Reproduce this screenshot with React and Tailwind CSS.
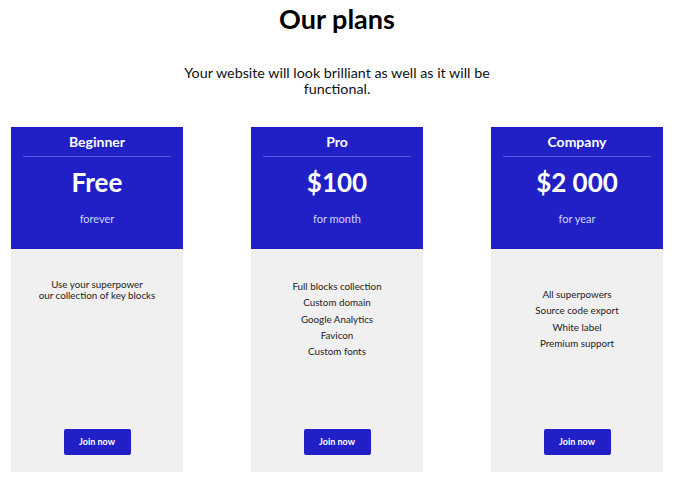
import React from "react";

const plans = [
  { name: "Beginner", price: "Free", period: "forever", type: "p", items: ["Use your superpower", "our collection of key blocks"], pt: "pt-[30px]" },
  { name: "Pro", price: "$100", period: "for month", type: "list", items: ["Full blocks collection", "Custom domain", "Google Analytics", "Favicon", "Custom fonts"], pt: "pt-[29px]" },
  { name: "Company", price: "$2 000", period: "for year", type: "list", items: ["All superpowers", "Source code export", "White label", "Premium support"], pt: "pt-[37px]" },
];

export default function App() {
  return (
    <div className="w-[685px] h-[487px] bg-white overflow-hidden" style={{ fontFamily: "Lato, 'Open Sans', sans-serif" }}>
      <div className="w-[674px]">
        <h1 className="text-center text-[27px] font-bold text-black leading-[30px] pt-[4px]">Our plans</h1>
        <p className="mx-auto mt-[31px] w-[320px] text-center text-[14.3px] font-normal leading-[16px] text-[#111]">
          Your website will look brilliant as well as it will be functional.
        </p>
      </div>
      <div className="flex gap-[68px] pl-[11px] mt-[30px]">
        {plans.map((p) => (
          <div key={p.name} className="w-[172px] flex flex-col">
            <div className="h-[122px] bg-[#2020c6] flex flex-col items-center text-white">
              <div className="text-[14px] font-bold leading-[16px] pt-[7px]">{p.name}</div>
              <div className="w-[148px] h-px bg-[#5a5ae0] mt-[6px]" />
              <div className="text-[26px] font-bold leading-[28px] mt-[11px]">{p.price}</div>
              <div className="text-[11px] font-normal leading-[14px] mt-[16px] text-[#d4d4fa]">{p.period}</div>
            </div>
            <div className={`h-[223px] bg-[#f0f0f0] flex flex-col items-center ${p.pt}`}>
              {p.type === "p" ? (
                <p className="text-center text-[9.8px] leading-[11px] text-[#222] font-normal">
                  {p.items[0]}
                  <br />
                  {p.items[1]}
                </p>
              ) : (
                <ul className="text-center text-[9.8px] leading-[16.3px] text-[#222] font-normal">
                  {p.items.map((it) => (
                    <li key={it}>{it}</li>
                  ))}
                </ul>
              )}
              <div className="flex-1" />
              <button className="mb-[17px] w-[67px] h-[26px] rounded-[2px] bg-[#2020c6] text-white text-[9px] font-bold">Join now</button>
            </div>
          </div>
        ))}
      </div>
    </div>
  );
}
